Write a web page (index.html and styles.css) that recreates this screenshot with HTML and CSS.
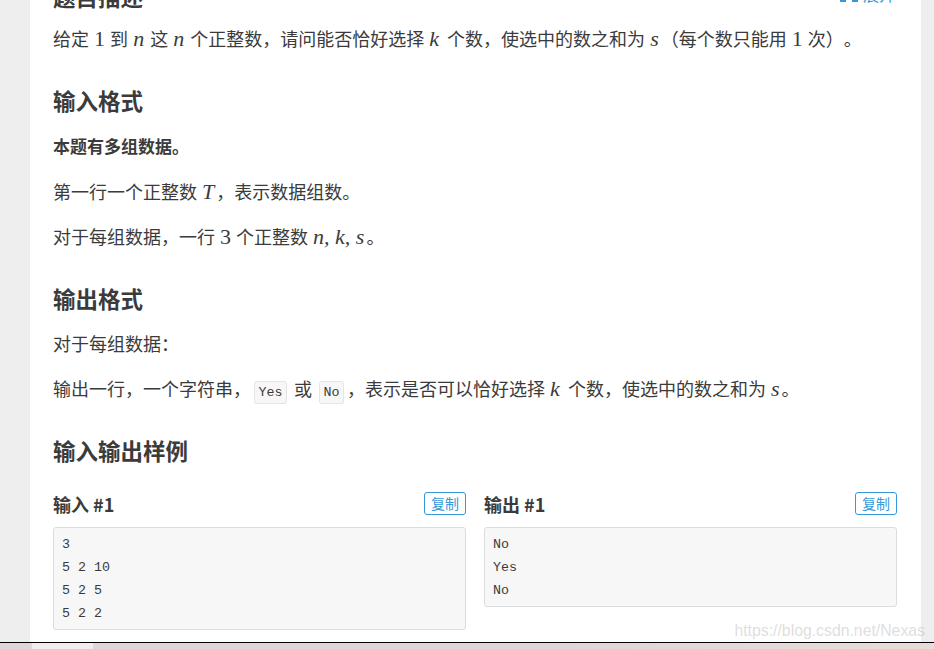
FILE: index.html
```html
<!DOCTYPE html>
<html lang="zh-CN">
<head>
<meta charset="utf-8">
<title>题目描述</title>
<link rel="stylesheet" href="styles.css">
</head>
<body>
<div class="viewport">
  <main class="card">
    <div class="title-row">
      <h2 class="h">题目描述</h2>
      <span class="expand"><span class="expand-icon"><i></i><i></i></span>展开</span>
    </div>
    <p class="para first">给定 <span class="m up">1</span> 到 <span class="m">n</span> 这 <span class="m">n</span> 个正整数，请问能否恰好选择 <span class="m wide">k</span> 个数，使选中的数之和为 <span class="m">s</span>（每个数只能用 <span class="m up">1</span> 次）。</p>
    <h2 class="h sec">输入格式</h2>
    <p class="para"><strong class="b">本题有多组数据。</strong></p>
    <p class="para">第一行一个正整数 <span class="m">T</span>，表示数据组数。</p>
    <p class="para">对于每组数据，一行 <span class="m up">3</span> 个正整数 <span class="m">n, k, s</span>。</p>
    <h2 class="h sec">输出格式</h2>
    <p class="para">对于每组数据：</p>
    <p class="para">输出一行，一个字符串，<code class="code">Yes</code> 或 <code class="code">No</code>，表示是否可以恰好选择 <span class="m wide">k</span> 个数，使选中的数之和为 <span class="m">s</span>。</p>
    <h2 class="h sec">输入输出样例</h2>
    <div class="samples">
      <section class="sample">
        <div class="sample-head"><h3 class="sub">输入 #1</h3><button class="copy">复制</button></div>
        <pre class="pre">3
5 2 10
5 2 5
5 2 2</pre>
      </section>
      <section class="sample">
        <div class="sample-head"><h3 class="sub">输出 #1</h3><button class="copy">复制</button></div>
        <pre class="pre">No
Yes
No</pre>
      </section>
    </div>
  </main>
  <div class="watermark">https://blog.csdn.net/Nexas</div>
</div>
<div class="strip"><span class="strip-tab"></span></div>
</body>
</html>
```
FILE: styles.css
```css
* { box-sizing: border-box; }
html, body { margin: 0; height: 649px; overflow: hidden; }
body {
  background: #eee;
  color: #3b3b3b;
  font-family: "Noto Sans CJK SC", "Liberation Sans", sans-serif;
  font-size: 18px;
  text-spacing-trim: space-all;
  display: flex;
  flex-direction: column;
}
.viewport { position: relative; height: 642px; overflow: hidden; flex: none; }
.card {
  display: flow-root;
  margin: 0 13px 0 30px;
  height: 642px;
  background: #fff;
  padding: 0 24px 0 23px;
}
.title-row { display: flex; justify-content: space-between; margin-top: -19px; height: 42px; }
.h { margin: 0; font-size: 22.5px; line-height: 30px; font-weight: 700; color: #3b3b3b; }
.expand { color: #3498db; font-size: 16px; line-height: 14px; display: flex; gap: 5px; margin-top: 6px; margin-right: 2px; height: 14px; }
.expand-icon { display: flex; gap: 6px; padding-top: 9px; }
.expand-icon i { display: block; width: 6px; height: 6px; background: #3498db; }
.para { margin: 0 0 15px; line-height: 30px; }
.para.first { margin-bottom: 14px; }
.sec { margin-top: 32px; margin-bottom: 15px; }
.b { font-size: 17px; font-weight: 700; }
.m { font-family: "Liberation Serif", serif; font-style: italic; font-size: 22px; line-height: 1; margin: 0 2px 0 1px; }
.m.wide { margin-right: 4px; }
.m.up { font-style: normal; margin: 0 1px; }
.code {
  font-family: "Liberation Mono", monospace;
  font-size: 13.33px;
  line-height: 1;
  background: #f7f7f7;
  border: 1px solid #e5e5e5;
  border-radius: 3px;
  padding: 3px 3.5px;
  margin: 0 3px;
}
.samples { display: grid; grid-template-columns: 413px 413px; gap: 18px; margin-top: 27px; align-items: start; }
.sample-head { display: flex; justify-content: space-between; height: 35px; }
.sub { margin: 0; font-size: 18px; line-height: 25px; font-weight: 700; }
.copy {
  width: 42px; height: 23px; padding: 0;
  border: 1px solid #3498db; border-radius: 3px;
  background: #fff; color: #3498db;
  font: 14px/21px "Noto Sans CJK SC", sans-serif;
}
.pre {
  margin: 0;
  padding: 5px 8px 4px;
  background: #f7f7f7;
  border: 1px solid #dcdcdc;
  border-radius: 3px;
  font-family: "Liberation Mono", monospace;
  font-size: 13.33px;
  line-height: 23px;
  color: #3b3b3b;
}
.watermark {
  position: absolute; right: 9px; top: 619px;
  color: rgba(170,170,170,.4);
  font: 15.8px/24px "Liberation Sans", sans-serif;
}
.strip {
  height: 7px; flex: none;
  border-top: 1px solid #000;
  background: linear-gradient(90deg, #e2d5da, #e2d5da 60%, #e8dcd8);
}
.strip-tab { display: block; width: 61px; height: 6px; margin-left: 32px; background: #f3ecee; }
```
